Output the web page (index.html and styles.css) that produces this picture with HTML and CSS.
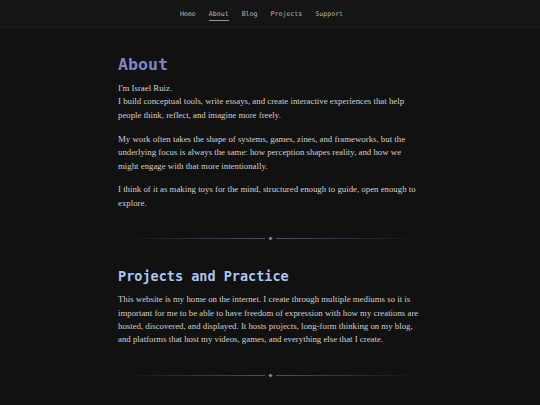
FILE: index.html
```html
<!DOCTYPE html>
<html lang="en">
<head>
<meta charset="utf-8">
<title>About</title>
<link rel="stylesheet" href="styles.css">
</head>
<body>
<nav class="nav">
  <a class="nav-link" href="#">Home</a>
  <a class="nav-link active" href="#">About</a>
  <a class="nav-link" href="#">Blog</a>
  <a class="nav-link" href="#">Projects</a>
  <a class="nav-link" href="#">Support</a>
</nav>
<main class="content">
  <section class="section">
    <h1 class="title">About</h1>
    <p class="text">I'm Israel Ruiz.<br>I build conceptual tools, write essays, and create interactive experiences that help people think, reflect, and imagine more freely.</p>
    <p class="text">My work often takes the shape of systems, games, zines, and frameworks, but the underlying focus is always the same: how perception shapes reality, and how we might engage with that more intentionally.</p>
    <p class="text">I think of it as making toys for the mind, structured enough to guide, open enough to explore.</p>
  </section>
  <div class="divider"><span class="line left"></span><span class="dot"></span><span class="line right"></span></div>
  <section class="section">
    <h2 class="subtitle">Projects and Practice</h2>
    <p class="text">This website is my home on the internet. I create through multiple mediums so it is important for me to be able to have freedom of expression with how my creations are hosted, discovered, and displayed. It hosts projects, long-form thinking on my blog, and platforms that host my videos, games, and everything else that I create.</p>
  </section>
  <div class="divider"><span class="line left"></span><span class="dot"></span><span class="line right"></span></div>
</main>
</body>
</html>
```
FILE: styles.css
```css
html, body {
  margin: 0;
  padding: 0;
  background: #111111;
}
body {
  font-family: "Liberation Serif", "DejaVu Serif", serif;
  color: #d2cfca;
}
.nav {
  height: 28px;
  box-sizing: border-box;
  padding-right: 17px;
  background: #151515;
  border-bottom: 1px solid #1b1b1b;
  display: flex;
  justify-content: center;
  align-items: center;
  gap: 13px;
}
.nav-link {
  font-family: "DejaVu Sans Mono", monospace;
  font-size: 6.6px;
  color: #b4b4b4;
  text-decoration: none;
  padding: 3px 0 2px;
  border-bottom: 1.5px solid transparent;
}
.nav-link.active {
  color: #a6bccf;
  border-bottom-color: #7f98b0;
}
.content {
  width: 304px;
  margin: 0 auto;
  padding-top: 27px;
}
.title {
  font-family: "DejaVu Sans Mono", monospace;
  font-weight: bold;
  font-size: 16.6px;
  line-height: 20px;
  color: #7a86c6;
  margin: 0 0 7px;
}
.subtitle {
  font-family: "DejaVu Sans Mono", monospace;
  font-weight: bold;
  font-size: 13.5px;
  line-height: 16px;
  color: #a9c6ee;
  margin: 0 0 9px;
}
.text {
  font-size: 8.8px;
  line-height: 13.4px;
  margin: 0 0 10.5px;
}
.text:last-child {
  margin-bottom: 0;
}
.divider {
  display: flex;
  align-items: center;
  justify-content: center;
  gap: 4px;
  margin: 27px 0 28px;
  height: 3px;
}
.line {
  height: 1px;
  width: 142px;
}
.line.left {
  background: linear-gradient(to right, rgba(80, 80, 120, 0), #4c4c72);
}
.line.right {
  background: linear-gradient(to left, rgba(80, 80, 120, 0), #4c4c72);
}
.dot {
  width: 3px;
  height: 3px;
  background: #7a80b8;
  transform: rotate(45deg);
}
```
